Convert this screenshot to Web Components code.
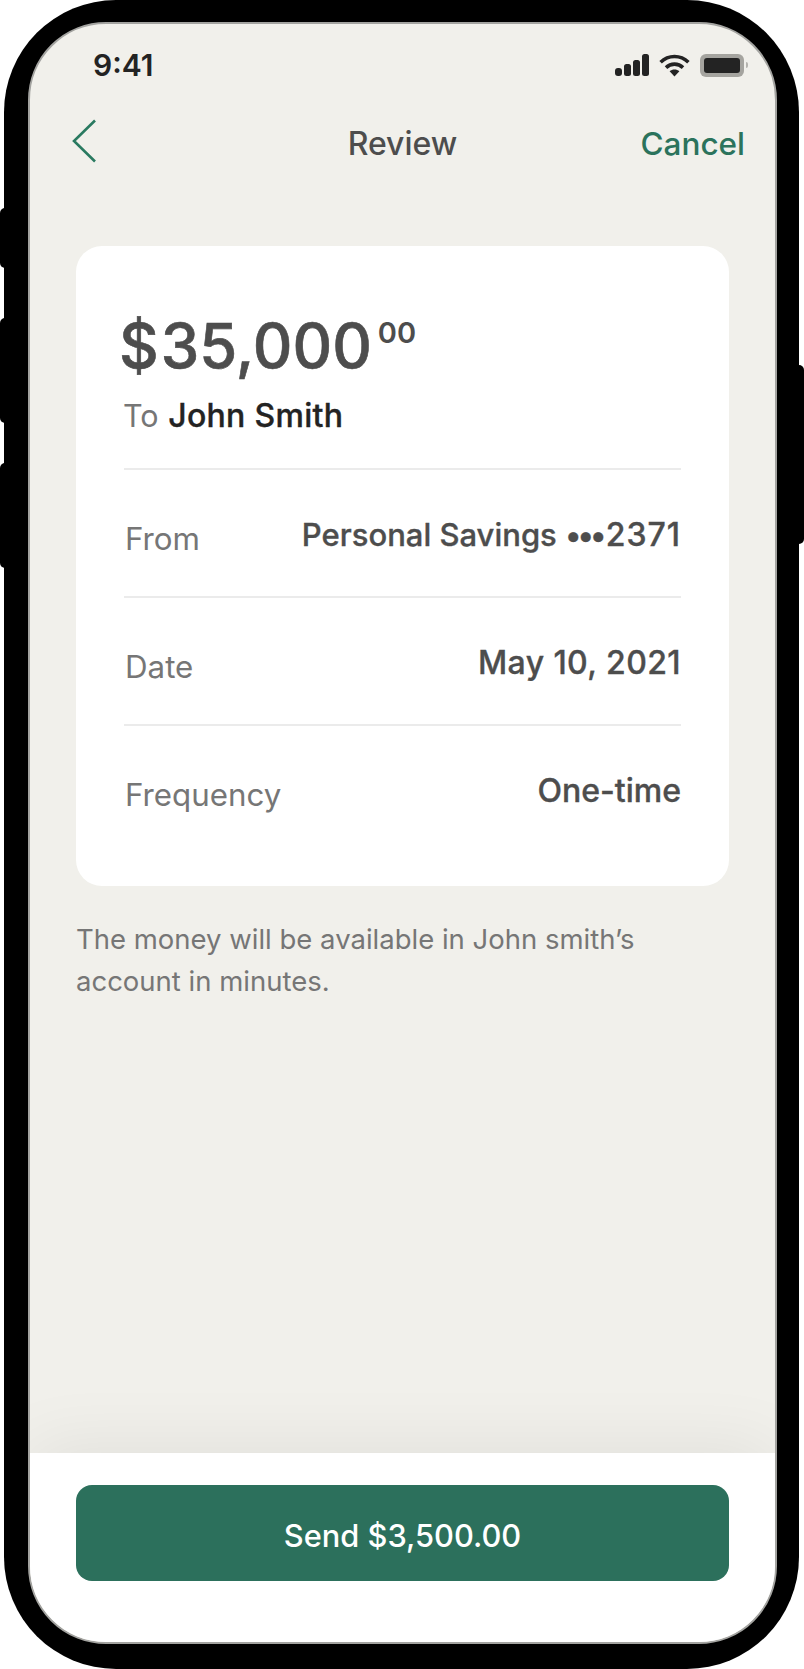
<!DOCTYPE html>
<html lang="en">
<head>
<meta charset="utf-8">
<title>Review</title>
<style>
  html, body { margin: 0; padding: 0; background: #fff; }
  body { font-family: Inter, "Liberation Sans", sans-serif; }
</style>
</head>
<body>
<phone-frame>
  <status-bar time="9:41"></status-bar>
  <nav-bar title="Review" action="Cancel"></nav-bar>
  <main-area>
    <review-card amount="35,000" cents="00" recipient="John Smith">
      <detail-row label="From" value="Personal Savings" mask="•••" tail="2371" style="--value-size:31px"></detail-row>
      <detail-row label="Date" value="May 10, 2021" style="--value-tracking:.4px"></detail-row>
      <detail-row label="Frequency" value="One-time"></detail-row>
    </review-card>
    <p-note>The money will be available in John smith’s account in minutes.</p-note>
  </main-area>
  <send-footer label="Send $3,500.00"></send-footer>
</phone-frame>

<script>
class PhoneFrame extends HTMLElement {
  constructor() {
    super();
    this.attachShadow({ mode: 'open' });
    this.shadowRoot.innerHTML = `
      <style>
        :host {
          display: block;
          position: relative;
          box-sizing: border-box;
          width: 804px;
          height: 1669px;
          padding: 0 5px 0 4px;
        }
        .body {
          position: relative;
          box-sizing: border-box;
          height: 100%;
          background: #000;
          border-radius: 112px;
          padding: 22px 22px 25px 24px;
        }
        .screen {
          box-sizing: border-box;
          height: 100%;
          display: flex;
          flex-direction: column;
          background: #f1f0eb;
          border: 2px solid #a3a3a0;
          border-radius: 78px;
          overflow: hidden;
        }
        .side {
          position: absolute;
          width: 12px;
          background: #000;
          border-radius: 5px;
        }
        .left { left: 0; }
        .right { right: 0; }
      </style>
      <div class="side left" style="top:208px;height:60px"></div>
      <div class="side left" style="top:318px;height:105px"></div>
      <div class="side left" style="top:463px;height:105px"></div>
      <div class="side right" style="top:365px;height:179px"></div>
      <div class="body">
        <div class="screen"><slot></slot></div>
      </div>
    `;
  }
}

class StatusBar extends HTMLElement {
  constructor() {
    super();
    this.attachShadow({ mode: 'open' });
  }

  connectedCallback() {
    this.shadowRoot.innerHTML = `
      <style>
        :host {
          display: flex;
          align-items: center;
          justify-content: space-between;
          height: 52px;
          padding: 15px 27px 0 63px;
          color: #232323;
        }
        .time {
          font-size: 30px;
          font-weight: 600;
          line-height: 34px;
        }
        .icons {
          display: flex;
          align-items: center;
          gap: 10px;
        }
        svg { display: block; }
        .battery {
          box-sizing: border-box;
          width: 44px;
          height: 23px;
          padding: 4px;
          background: #a5a49f;
          border-radius: 6px;
        }
        .battery div {
          height: 100%;
          background: #232323;
          border-radius: 3px;
        }
        .cell { display: flex; align-items: center; gap: 2px; }
        .nub { width: 2px; height: 6px; background: #b5b4af; border-radius: 0 2px 2px 0; }
      </style>
      <div class="time">${this.getAttribute('time')}</div>
      <div class="icons">
        <svg width="34" height="22" viewBox="0 0 34 22" fill="#232323">
          <rect x="0" y="14" width="7" height="8" rx="3"/>
          <rect x="9" y="10" width="7" height="12" rx="2.5"/>
          <rect x="18" y="6" width="7" height="16" rx="2.5"/>
          <rect x="27" y="0" width="7" height="22" rx="2.5"/>
        </svg>
        <svg width="31" height="23" viewBox="0 0 31 23" fill="none" stroke="#232323" stroke-width="3.6">
          <path d="M1.6 8.2C9.5 .6 21.5 .6 29.4 8.2"/>
          <path d="M7 13.6C11.8 9 19.2 9 24 13.6"/>
          <path d="M10.6 17.2 15.5 22.6 20.4 17.2C17.6 14.8 13.4 14.8 10.6 17.2Z" fill="#232323" stroke="none"/>
        </svg>
        <div class="cell">
          <div class="battery"><div></div></div>
          <div class="nub"></div>
        </div>
      </div>
    `;
  }
}

class NavBar extends HTMLElement {
  constructor() {
    super();
    this.attachShadow({ mode: 'open' });
  }

  connectedCallback() {
    this.shadowRoot.innerHTML = `
      <style>
        :host {
          display: grid;
          grid-template-columns: 1fr auto 1fr;
          align-items: center;
          height: 64px;
          padding: 20px 30px 2px;
          font-size: 32px;
          font-weight: 500;
        }
        svg { display: block; margin: -4px 0 0 12px; }
        .title { color: #4d4d4d; }
        .action { justify-self: end; color: #2b735c; font-size: 31.5px; }
      </style>
      <svg width="24" height="44" viewBox="0 0 24 44" fill="none" stroke="#2a7a60" stroke-width="2.6">
        <path d="M23 1.5 2 22 23 42.5"/>
      </svg>
      <div class="title">${this.getAttribute('title')}</div>
      <div class="action">${this.getAttribute('action')}</div>
    `;
  }
}

class MainArea extends HTMLElement {
  constructor() {
    super();
    this.attachShadow({ mode: 'open' });
    this.shadowRoot.innerHTML = `
      <style>
        :host {
          display: block;
          flex: 1;
          padding: 69px 46px 0;
        }
      </style>
      <slot></slot>
    `;
  }
}

class ReviewCard extends HTMLElement {
  constructor() {
    super();
    this.attachShadow({ mode: 'open' });
  }

  connectedCallback() {
    this.shadowRoot.innerHTML = `
      <style>
        :host {
          display: block;
          box-sizing: border-box;
          height: 640px;
          padding: 68px 48px 0;
          background: #fff;
          border-radius: 26px;
        }
        .amount {
          display: flex;
          align-items: flex-start;
          margin-left: -5px;
          font-size: 61.5px;
          font-weight: 500;
          line-height: 64px;
          color: #4d4d4d;
        }
        .dollar { margin-right: 2px; }
        .whole { -webkit-text-stroke: .6px #4d4d4d; }
        .dollar { -webkit-text-stroke: .6px #4d4d4d; }
        .cents {
          margin-left: 6px;
          font-size: 29px;
          font-weight: 600;
          line-height: 30px;
          margin-top: 4px;
        }
        .to {
          margin: 19px 0 0 -1px;
          padding-bottom: 33px;
          font-size: 30.5px;
          line-height: 38px;
          color: #767676;
        }
        .to b {
          margin-left: 1px;
          font-size: 32px;
          font-weight: 500;
          letter-spacing: .3px;
          color: #232323;
          -webkit-text-stroke: .35px #232323;
        }
      </style>
      <div class="amount"><span class="dollar">$</span><span class="whole">${this.getAttribute('amount')}</span><span class="cents">${this.getAttribute('cents')}</span></div>
      <div class="to">To <b>${this.getAttribute('recipient')}</b></div>
      <slot></slot>
    `;
  }
}

class DetailRow extends HTMLElement {
  constructor() {
    super();
    this.attachShadow({ mode: 'open' });
  }

  connectedCallback() {
    const mask = this.getAttribute('mask');
    const tail = mask ? ` <span class="mask">${mask}</span><span class="tail">${this.getAttribute('tail')}</span>` : '';
    this.shadowRoot.innerHTML = `
      <style>
        :host {
          display: flex;
          justify-content: space-between;
          box-sizing: border-box;
          height: 128px;
          padding-top: 46px;
          border-top: 2px solid #ebebeb;
          font-size: 31.3px;
          line-height: 38px;
        }
        .label { color: #767676; margin: 4px 0 0 1px; }
        .value {
          color: #4d4d4d;
          font-weight: 500;
          font-size: var(--value-size, 32px);
          letter-spacing: var(--value-tracking, 0);
          white-space: nowrap;
          -webkit-text-stroke: .35px #4d4d4d;
        }
        .mask { letter-spacing: -4px; margin-right: 3px; }
        .tail { font-size: 32px; letter-spacing: 1px; }
      </style>
      <span class="label">${this.getAttribute('label')}</span>
      <span class="value">${this.getAttribute('value')}${tail}</span>
    `;
  }
}

class PNote extends HTMLElement {
  constructor() {
    super();
    this.attachShadow({ mode: 'open' });
    this.shadowRoot.innerHTML = `
      <style>
        :host {
          display: block;
          margin-top: 33px;
          width: 580px;
          font-size: 27.5px;
          line-height: 41.5px;
          color: #767676;
        }
      </style>
      <slot></slot>
    `;
  }
}

class SendFooter extends HTMLElement {
  constructor() {
    super();
    this.attachShadow({ mode: 'open' });
  }

  connectedCallback() {
    this.shadowRoot.innerHTML = `
      <style>
        :host {
          display: block;
          box-sizing: border-box;
          height: 189px;
          padding: 32px 46px 0;
          background: #fff;
          box-shadow: 0 -6px 70px rgba(0, 0, 0, 0.07);
        }
        button {
          display: block;
          width: 100%;
          height: 96px;
          padding: 4px 0 0;
          border: 0;
          border-radius: 16px;
          background: #2c705c;
          color: #fff;
          font: 500 30.8px Inter, "Liberation Sans", sans-serif;
          cursor: pointer;
        }
      </style>
      <button type="button">${this.getAttribute('label')}</button>
    `;
  }
}

customElements.define('phone-frame', PhoneFrame);
customElements.define('status-bar', StatusBar);
customElements.define('nav-bar', NavBar);
customElements.define('main-area', MainArea);
customElements.define('review-card', ReviewCard);
customElements.define('detail-row', DetailRow);
customElements.define('p-note', PNote);
customElements.define('send-footer', SendFooter);
</script>
</body>
</html>
